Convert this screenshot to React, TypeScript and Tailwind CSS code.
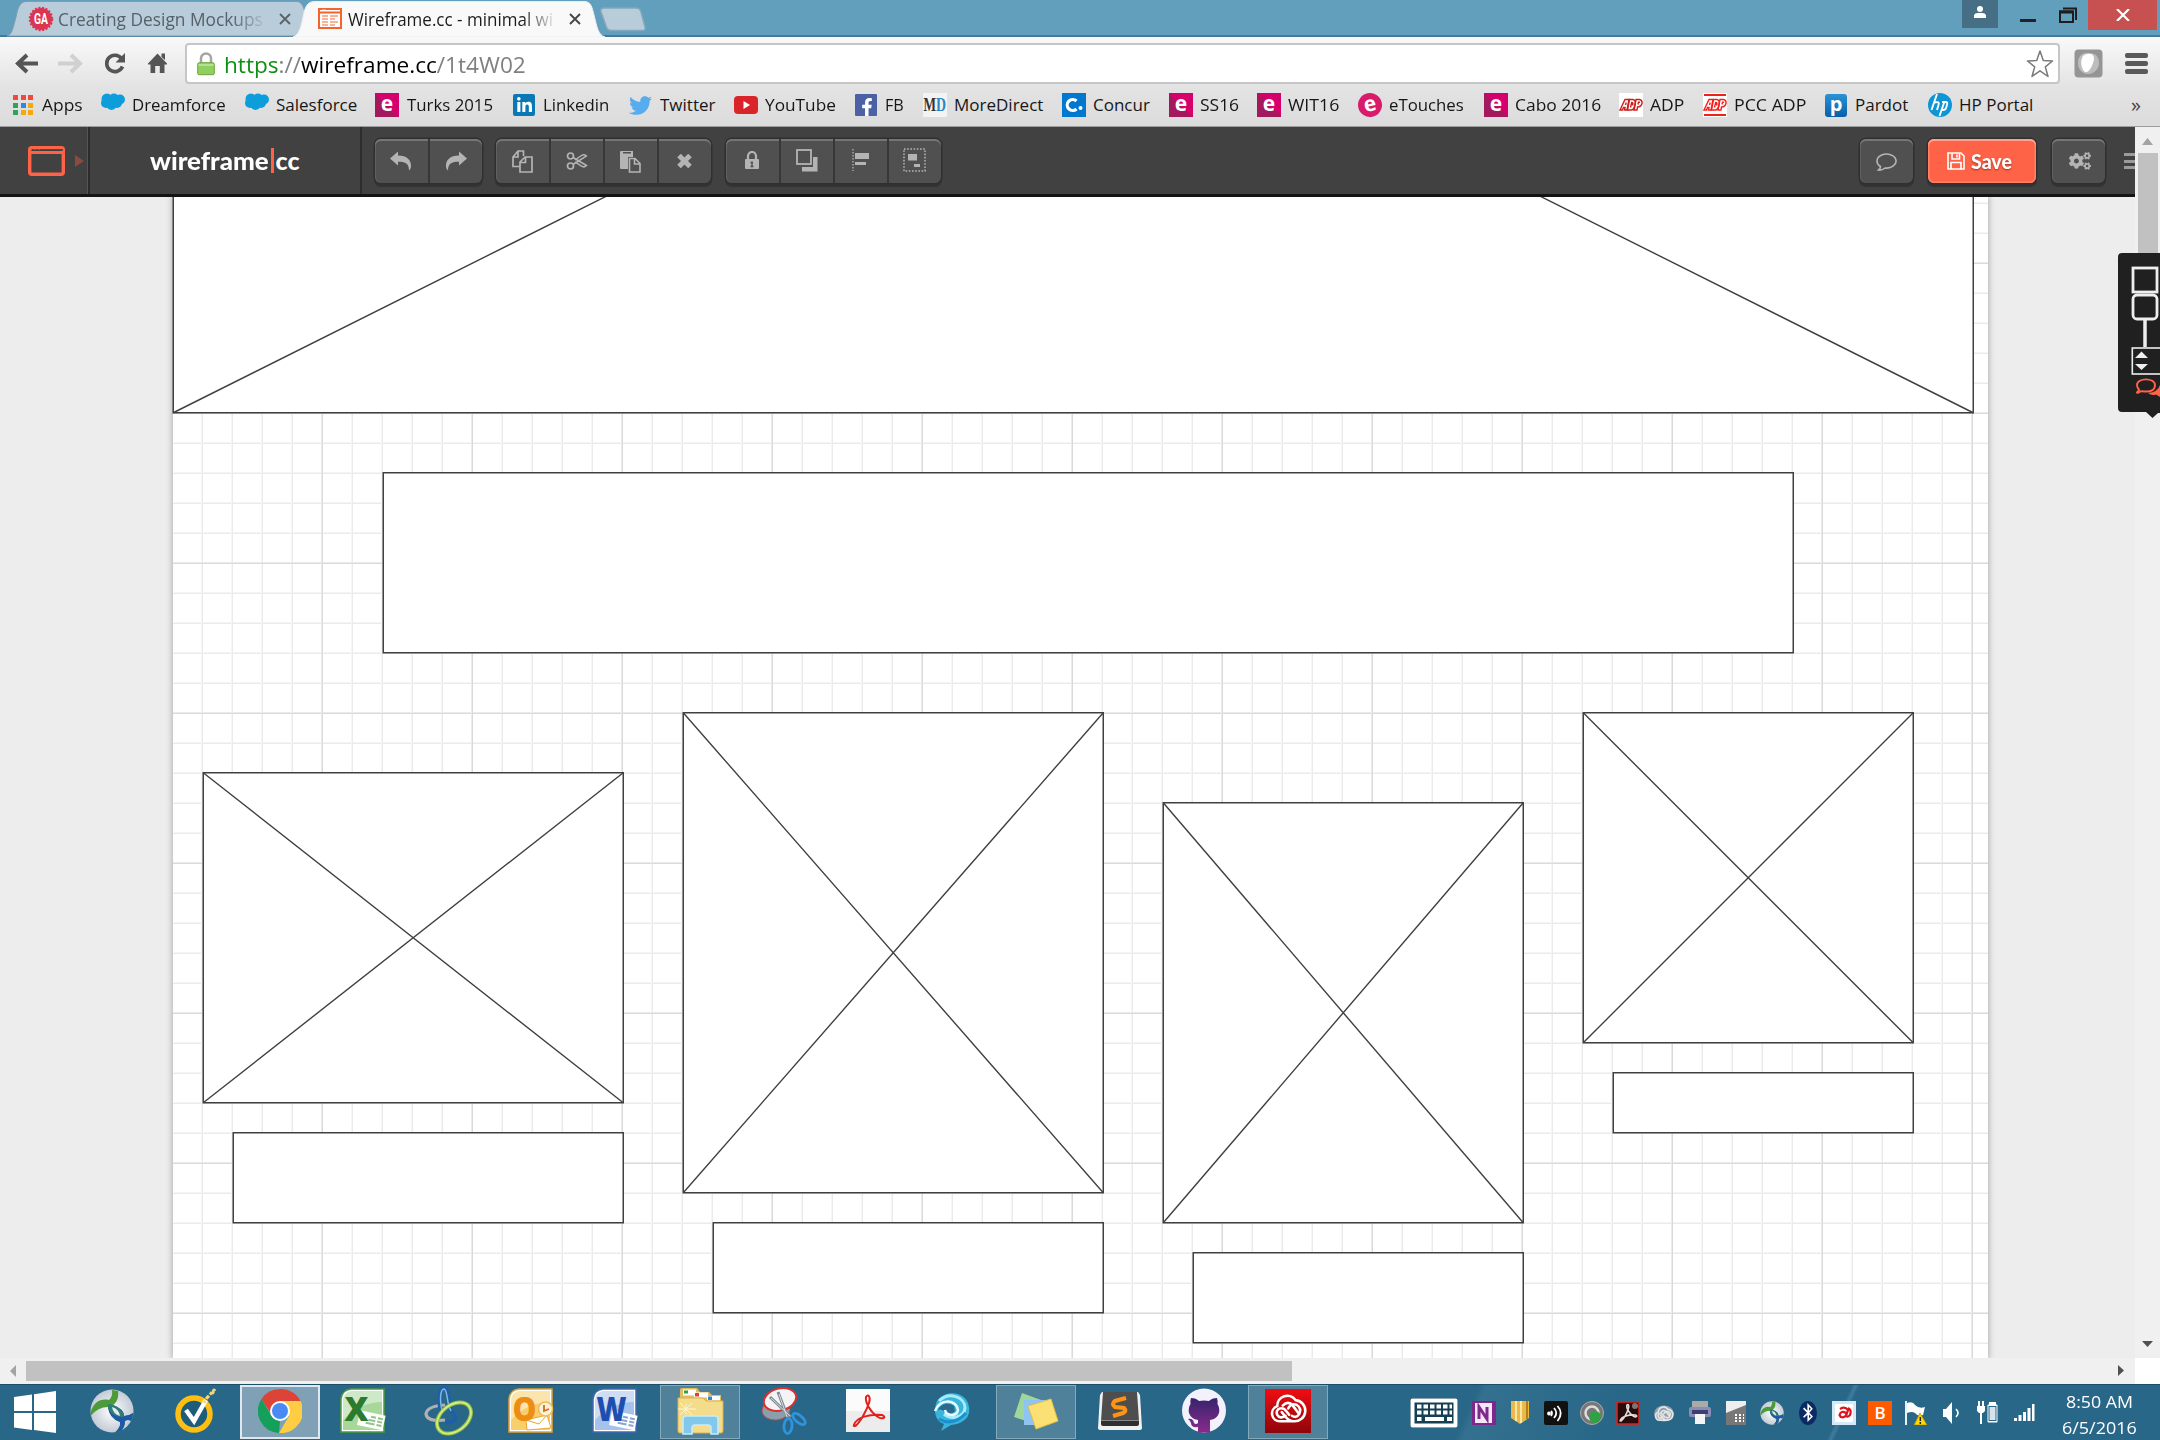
import { useLayoutEffect, useRef, useState, type ReactNode } from "react";
import { FaTwitter, FaFacebookF, FaLinkedinIn, FaCogs, FaBluetoothB } from "react-icons/fa";

/** Text squeezed or stretched horizontally to an exact width. */
function Fit({ w, className = "", children }: { w: number; className?: string; children: ReactNode }) {
  const ref = useRef<HTMLSpanElement>(null);
  const [s, setS] = useState(1);
  useLayoutEffect(() => {
    if (ref.current && ref.current.offsetWidth) setS(w / ref.current.offsetWidth);
  }, [w]);
  return (
    <span className={`block shrink-0 whitespace-nowrap ${className}`} style={{ width: w }}>
      <span ref={ref} className="inline-block origin-left" style={{ transform: `scaleX(${s})` }}>
        {children}
      </span>
    </span>
  );
}

/* ---------- Tab strip ---------- */

function CloseX({ color }: { color: string }) {
  return (
    <svg width="12" height="12" viewBox="0 0 12 12" stroke={color} strokeWidth="1.9">
      <path d="M1 1L11 11M11 1L1 11" />
    </svg>
  );
}

function TabStrip() {
  return (
    <div className="relative flex h-[37px] items-start bg-[#629fbd] shadow-[inset_0_-2px_0_#45799a]">
      <div className="relative h-[37px] w-[305px]">
        <svg className="absolute inset-0" width="305" height="37">
          <path d="M7 36C12 35 13 28 16 17C18 7 20 2 26 1.500H297C302 2 303 6 305 12V36Z" fill="#b9ccda" stroke="#7d9db1" />
        </svg>
        <div className="relative flex h-full items-center pl-[28px]">
          <svg width="26" height="26" viewBox="0 0 26 26">
            <circle cx="13" cy="13" r="11" fill="#db3552" stroke="#db3552" strokeWidth="2.500" strokeDasharray="2 1.500" />
            <text x="6" y="18" fontFamily="Roboto" fontWeight="700" fontSize="14" fill="#fff" textLength="14" lengthAdjust="spacingAndGlyphs">GA</text>
          </svg>
          <Fit w={205} className="ml-[4px] text-[17.5px] leading-[24px] text-[#56616a] [mask-image:linear-gradient(to_right,#000_85%,rgba(0,0,0,0.15))]">Creating Design Mockups</Fit>
          <div className="ml-[16px]"><CloseX color="#59656d" /></div>
        </div>
      </div>
      <div className="relative -ml-[12px] h-[37px] w-[316px]">
        <svg className="absolute inset-0" width="316" height="37">
          <path d="M0 37C6 35 8 27 10 17C12 7 14 2 21 1.500H292C298 2 299 7 301 15C304 27 305 35 312 37Z" fill="#f9f9f9" stroke="#e9eef1" />
        </svg>
        <div className="relative flex h-full items-center pl-[25px]">
          <svg width="24" height="21" viewBox="0 0 24 21">
            <rect x="1" y="1" width="22" height="19" fill="#fff" stroke="#f4622d" strokeWidth="2" />
            <path d="M1 4.500H23" stroke="#f4622d" strokeWidth="2" />
            <path d="M4 2.200H8" stroke="#fff" strokeWidth="1" />
            <path d="M4 8H10M4 11H10M4 14H10M4 17H10M12 8H20M12 11H17M12 14H20M12 17H17" stroke="#f79a77" strokeWidth="1.600" />
          </svg>
          <Fit w={205} className="ml-[6px] text-[17.5px] leading-[24px] text-[#1c1c1c] [mask-image:linear-gradient(to_right,#000_85%,rgba(0,0,0,0.12))]">Wireframe.cc - minimal wi</Fit>
          <div className="ml-[16px]"><CloseX color="#474747" /></div>
        </div>
      </div>
      <svg className="-ml-[11px] mt-[7px]" width="50" height="25">
        <path d="M6 1H38Q42 1 43 5L47 20Q48 23.500 44 23.500H14Q9 23.500 8 19L3 5Q2 1 6 1Z" fill="#b9ccda" stroke="#80a8be" strokeWidth="1.500" />
      </svg>
      <div className="ml-auto flex h-[30px] items-start">
        <div className="flex h-[28px] w-[36px] justify-center bg-[#466f85] pt-[6px]">
          <svg width="14" height="13" viewBox="0 0 14 13" fill="#fff">
            <circle cx="7" cy="3" r="3" />
            <path d="M1 12V10Q1 7 5 7H9Q13 7 13 10V12Z" />
          </svg>
        </div>
        <div className="ml-[22px] mt-[19px] h-[3px] w-[16px] bg-[#222]" />
        <svg className="ml-[23px] mt-[7px]" width="18" height="16" fill="none" stroke="#1d1d1d">
          <path d="M4 1.500H17V13" strokeWidth="2" />
          <rect x="1" y="4.500" width="13" height="10.500" strokeWidth="2" />
          <path d="M0 5H15" strokeWidth="3" />
        </svg>
        <div className="ml-[11px] mr-[3px] flex h-[30px] w-[69px] items-center justify-center bg-[#c75050]">
          <svg width="14" height="12" stroke="#fff" strokeWidth="2.200"><path d="M1 0L13 12M13 0L1 12" /></svg>
        </div>
      </div>
    </div>
  );
}

/* ---------- Address row ---------- */

function AddressRow() {
  return (
    <div className="flex h-[49px] items-center bg-gradient-to-b from-[#f9f9f9] to-[#e4e4e4] pt-[4px]">
      <svg width="185" height="40" viewBox="0 0 185 40" fill="none">
        <path d="M38 19.500H18M27 11L18 19.500L27 28" stroke="#555" strokeWidth="4" />
        <path d="M58 19.500H79M71 11L80 19.500L71 28" stroke="#d0d0d0" strokeWidth="4" />
        <path d="M121.500 14.500A8.200 8.200 0 1 0 122.500 22.500" stroke="#555" strokeWidth="3.600" />
        <path d="M125 9V18.500H115.500Z" fill="#555" />
        <path d="M157.500 9.500L167 19.500V20.500H164.500V29H159.800V22H155.200V29H150.500V20.500H148V19.500Z" fill="#555" />
        <path d="M161.500 9.500H165V16L161.500 13Z" fill="#555" />
      </svg>
      <div className="flex h-[41px] w-[1875px] items-center rounded-[4px] border-2 border-[#c6c6c6] bg-white pl-[10px]">
        <svg width="18" height="24" viewBox="0 0 18 24">
          <path d="M4 12V6.500A5 5 0 0 1 14 6.500V12" fill="none" stroke="#a5a5a5" strokeWidth="2.500" />
          <rect x="0.700" y="10.700" width="16.600" height="12" rx="1.500" fill="#91d05f" stroke="#6ca63f" />
          <path d="M1.500 13H16.500" stroke="#b5e391" strokeWidth="2" />
        </svg>
        <Fit w={302} className="ml-[9px] text-[22px] leading-[30px] text-[#808080]">
          <span className="text-[#0b9010]">https</span>://<span className="text-black">wireframe.cc</span>/1t4W02
        </Fit>
        <svg className="ml-auto mr-[4px]" width="28" height="28" viewBox="0 0 28 28">
          <path d="M14 1L17.300 10.500L26.500 11L19.300 16.800L22 26.500L14 20.800L6 26.500L8.700 16.800L1.500 11L10.700 10.500Z" fill="#fff" stroke="#7a7a7a" strokeWidth="1.500" strokeLinejoin="round" />
        </svg>
      </div>
      <svg className="ml-[14px]" width="29" height="29" viewBox="0 0 29 29">
        <rect x="0.500" y="0.500" width="28" height="28" rx="4" fill="#959595" />
        <path d="M4 14C4 7 9 3 15 4C22 4 25 8 25 14C25 20 20 25 14 25C8 25 4 20 4 14Z" fill="#bdbdbd" />
        <path d="M14 5C20 4 21 9 19 14C17 20 14 24 11 23C8 21 6 14 8 9C9 6 11 5 14 5Z" fill="#fff" />
      </svg>
      <div className="ml-[22px] flex w-[23px] flex-col gap-[3px]">
        <div className="h-[5px] rounded-[2px] bg-[#5a5a5a]" />
        <div className="h-[5px] rounded-[2px] bg-[#5a5a5a]" />
        <div className="h-[5px] rounded-[2px] bg-[#5a5a5a]" />
      </div>
    </div>
  );
}

/* ---------- Bookmarks ---------- */

const Apps = () => (
  <div className="grid w-[20px] grid-cols-3 gap-[2.5px]">
    <i className="h-[5px] bg-[#f04a3e]" /><i className="h-[5px] bg-[#f04a3e]" /><i className="h-[5px] bg-[#f04a3e]" />
    <i className="h-[5px] bg-[#2fa35b]" /><i className="h-[5px] bg-[#2b87e8]" /><i className="h-[5px] bg-[#f5a90c]" />
    <i className="h-[5px] bg-[#2fa35b]" /><i className="h-[5px] bg-[#f5a90c]" /><i className="h-[5px] bg-[#f5a90c]" />
  </div>
);
const Cloud = () => (
  <svg className="-mt-[7px]" width="24" height="17" viewBox="0 0 24 17" fill="#0d9ddb">
    <circle cx="6" cy="6" r="5.500" /><circle cx="13" cy="5.500" r="5" /><circle cx="19" cy="6.500" r="5" />
    <circle cx="5" cy="10" r="5" /><circle cx="10.500" cy="12" r="5" /><circle cx="16" cy="10" r="5" />
  </svg>
);
const ESquare = () => (
  <div className="flex h-[24px] w-[24px] items-center justify-center bg-gradient-to-tr from-[#a3195b] from-50% to-[#d6006d] to-50% pb-[4px] text-[21px] font-bold leading-none text-white">e</div>
);
const ECircle = () => (
  <div className="flex h-[24px] w-[24px] -rotate-12 items-center justify-center rounded-full bg-[#d81b6a] pb-[4px] text-[21px] font-bold leading-none text-white">e</div>
);
const LinkedIn = () => (
  <div className="flex h-[22px] w-[22px] items-center justify-center rounded-[2px] bg-[#0a78b5]"><FaLinkedinIn size={17} color="#fff" /></div>
);
const YouTube = () => (
  <svg width="24" height="18"><rect width="24" height="18" rx="4" fill="#d9252a" /><path d="M9.500 5L16 9L9.500 13Z" fill="#fff" /></svg>
);
const Facebook = () => (
  <div className="flex h-[22px] w-[22px] items-end justify-end overflow-hidden rounded-[1px] bg-[#4a62a5] pr-[1px]"><FaFacebookF size={18} color="#fff" /></div>
);
const MoreDirect = () => (
  <svg width="24" height="24"><rect width="24" height="24" fill="#f3f3f3" />
    <text x="0.500" y="18" fontFamily="Liberation Serif" fontWeight="700" fontSize="18" textLength="12.500" lengthAdjust="spacingAndGlyphs" fill="#333">M</text>
    <text x="13" y="18" fontFamily="Liberation Serif" fontWeight="700" fontSize="18" textLength="10" lengthAdjust="spacingAndGlyphs" fill="#2a88c4">D</text>
  </svg>
);
const Concur = () => (
  <svg width="24" height="24"><rect width="24" height="24" fill="#0078cf" />
    <path d="M14.500 8A5.500 5.500 0 1 0 14.500 16" fill="none" stroke="#fff" strokeWidth="3.200" /><circle cx="18.500" cy="15" r="2" fill="#fff" /></svg>
);
const Adp = ({ bars = false }: { bars?: boolean }) => (
  <svg width="24" height="24"><rect width="24" height="24" fill="#fff" />
    {bars && <path d="M1 2H23M1 22H23" stroke="#f2201b" strokeWidth="2" />}
    <g fill="none" stroke={bars ? "#f2201b" : "#cb1f1b"} strokeWidth="1.400">
      <path d="M1 17L6 6.500H10L8 17H5.500L6 14.500H4.500L3.500 17ZM6.500 12L7.200 9.500" />
      <path d="M8.500 17L10.500 6.500H14Q17 7 16 12Q15 17 12 17ZM11.500 14.500L12.700 9.500Q14.500 9.500 13.500 12.500" />
      <path d="M15 17L17 6.500H20.500Q23.500 7 23 10.500Q22 14 18.500 14L18 17ZM19 11.500L19.500 9.200H21" />
    </g>
  </svg>
);
const Pardot = () => (
  <div className="flex h-[23px] w-[22px] items-center justify-center rounded-[3px] bg-gradient-to-b from-[#2b93d6] to-[#075fa8] pb-[3px] text-[20px] font-bold leading-none text-white">p</div>
);
const Hp = () => (
  <svg width="24" height="24"><circle cx="12" cy="12" r="12" fill="#0d96d6" />
    <path d="M9 1L3.500 17M6.500 9.500Q12 8 10.500 12L9 17M16.500 8.500L11.500 23M14 9H17.500Q20 9 19 12L18 15Q17.500 17 15 17H13.500" fill="none" stroke="#fff" strokeWidth="1.900" /></svg>
);

type Mark = { icon: ReactNode; label: string; tw: number; width: string; gap?: string };
const MARKS: Mark[] = [
  { icon: <Apps />, label: "Apps", tw: 41, width: "w-[88px]", gap: "gap-[9px]" },
  { icon: <Cloud />, label: "Dreamforce", tw: 94, width: "w-[144px]" },
  { icon: <Cloud />, label: "Salesforce", tw: 81, width: "w-[130px]" },
  { icon: <ESquare />, label: "Turks 2015", tw: 86, width: "w-[138px]", gap: "gap-[8px]" },
  { icon: <LinkedIn />, label: "Linkedin", tw: 66, width: "w-[116px]", gap: "gap-[8px]" },
  { icon: <FaTwitter size={23} color="#55acee" />, label: "Twitter", tw: 55, width: "w-[105px]", gap: "gap-[8px]" },
  { icon: <YouTube />, label: "YouTube", tw: 71, width: "w-[121px]" },
  { icon: <Facebook />, label: "FB", tw: 19, width: "w-[68px]", gap: "gap-[8px]" },
  { icon: <MoreDirect />, label: "MoreDirect", tw: 89, width: "w-[139px]" },
  { icon: <Concur />, label: "Concur", tw: 57, width: "w-[107px]" },
  { icon: <ESquare />, label: "SS16", tw: 39, width: "w-[88px]" },
  { icon: <ESquare />, label: "WIT16", tw: 51, width: "w-[101px]" },
  { icon: <ECircle />, label: "eTouches", tw: 75, width: "w-[126px]" },
  { icon: <ESquare />, label: "Cabo 2016", tw: 86, width: "w-[135px]" },
  { icon: <Adp />, label: "ADP", tw: 34, width: "w-[84px]" },
  { icon: <Adp bars />, label: "PCC ADP", tw: 72, width: "w-[122px]" },
  { icon: <Pardot />, label: "Pardot", tw: 53, width: "w-[103px]", gap: "gap-[8px]" },
  { icon: <Hp />, label: "HP Portal", tw: 74, width: "w-[110px]" },
];

function Bookmarks() {
  return (
    <div className="flex h-[41px] items-center border-b border-[#9d9d9d] bg-gradient-to-b from-[#e3e3e3] to-[#dcdcdc] pb-[2px] pl-[13px]">
      {MARKS.map((m) => (
        <div key={m.label} className={`flex h-full shrink-0 items-center ${m.gap ?? "gap-[7px]"} ${m.width}`}>
          {m.icon}
          <Fit w={m.tw} className="text-[17px] leading-[24px] text-[#161616]">{m.label}</Fit>
        </div>
      ))}
      <span className="ml-auto mr-[19px] text-[20px] leading-none text-[#444]">»</span>
    </div>
  );
}

/* ---------- Editor toolbar ---------- */

const G = "#b4b4b4";
const Undo = ({ flip = false }: { flip?: boolean }) => (
  <svg className={flip ? "-scale-x-100" : ""} width="22" height="20" viewBox="0 0 22 20" fill={G}>
    <path d="M0 7.500L8 0.500V4.500C17 4.500 21.500 9 21 16Q20.700 18 19 19.500C19 13 16 10.500 8 10.700V14.500Z" />
  </svg>
);
const Copy = () => (
  <svg width="21" height="23" viewBox="0 0 21 23" fill="none" stroke={G} strokeWidth="1.700">
    <path d="M8 16.500H1V7L6 1H11.500V6M6 1V7H1" />
    <path d="M8 22V12L13 7H20V22ZM13.500 7V12.500H8" />
  </svg>
);
const Cut = () => (
  <svg width="22" height="18" viewBox="0 0 22 18" fill="none" stroke={G} strokeWidth="1.700">
    <circle cx="4.500" cy="4" r="3" /><circle cx="4.500" cy="14" r="3" />
    <path d="M7 5.500L20.500 13.500Q18 16 15.500 14L9 9.800M7 12.500L20.500 4Q18 1.800 15.500 3.500L9 8" strokeWidth="1.500" />
  </svg>
);
const Paste = () => (
  <svg width="21" height="23" viewBox="0 0 21 23">
    <path d="M1 1H13V7H8V19H1Q0 19 0 18V2Q0 1 1 1Z" fill={G} /><path d="M3 2.800H11" stroke="#515151" strokeWidth="1.500" />
    <path d="M9.500 8.500H15L20 13.500V22H9.500ZM14.500 8.500V14H20" fill="#515151" stroke={G} strokeWidth="1.600" />
  </svg>
);
const Times = () => <svg width="15" height="14" stroke={G} strokeWidth="5"><path d="M2 1.500L13 12.500M13 1.500L2 12.500" /></svg>;
const Lock = () => (
  <svg className="-mt-[2px]" width="14" height="18" viewBox="0 0 14 18"><path d="M3 9V5A4 4 0 0 1 11 5V9" fill="none" stroke={G} strokeWidth="2.200" />
    <rect y="8" width="14" height="10" rx="1" fill={G} /><path d="M7 10.500V15.500M5.500 11.500H8M5.500 15.500H8.500" stroke="#515151" strokeWidth="1.400" /></svg>
);
const Layer = () => (
  <svg className="-mt-[2px]" width="22" height="23" viewBox="0 0 22 23"><path d="M17 8H21.500V22.500H6V18H17Z" fill={G} /><rect x="1" y="1" width="14" height="14" fill="none" stroke={G} strokeWidth="1.800" /></svg>
);
const Align = () => (
  <svg className="-mt-[3px]" width="18" height="22" viewBox="0 0 18 22"><path d="M1 0V22" stroke={G} strokeWidth="1.300" strokeDasharray="1.500 1.500" /><path d="M3 4H17V10H3ZM3 13H14V16H3Z" fill={G} /></svg>
);
const Group = () => (
  <svg className="-mt-[3px]" width="23" height="24" viewBox="0 0 23 24"><rect x="1" y="1" width="21" height="22" fill="none" stroke={G} strokeWidth="1.500" strokeDasharray="1.600 1.600" /><path d="M5 6H14V12.500H5ZM11 16H17V19H11Z" fill={G} /></svg>
);

const BTN_BOX = "flex h-[44px] overflow-hidden rounded-[6px] bg-[#505050] shadow-[inset_0_2px_0_#757575,inset_1px_0_0_#606060,0_0_0_1.5px_#303030,0_3px_0_1px_#333]";

function ButtonGroup({ items }: { items: ReactNode[] }) {
  return (
    <div className={BTN_BOX}>
      {items.map((it, i) => (
        <div key={i} className={`flex items-center justify-center pr-px ${i ? "w-[54px] border-l-2 border-[#373737]" : "w-[53px]"}`}>{it}</div>
      ))}
    </div>
  );
}

function EditorBar() {
  return (
    <div className="flex h-[70px] w-[2135px] shrink-0 overflow-hidden border-b-[3px] border-[#141414] bg-[#414141]">
      <div className="flex w-[90px] items-center border-r-2 border-[#2b2b2b] pl-[28px] pt-px shadow-[inset_-1px_0_0_#555]">
        <svg width="37" height="30" viewBox="0 0 37 30">
          <rect x="1.700" y="1.700" width="33.600" height="26.600" rx="2" fill="none" stroke="#ff6347" strokeWidth="3.400" />
          <path d="M2 6.500H35" stroke="#ff6347" strokeWidth="3" /><path d="M4 4H6M8 4H10M12 4H35" stroke="#414141" strokeWidth="1.500" />
        </svg>
        <svg className="ml-[10px]" width="9" height="12"><path d="M0 0L9 6L0 12Z" fill="#8a4a40" /></svg>
      </div>
      <div className="flex w-[272px] items-center border-r-2 border-[#2d2d2d] pl-[60px] font-['Lato',sans-serif] text-[25px] font-black leading-none text-white">
        <Fit w={119}>wireframe</Fit>
        <div className="mx-[2px] h-[25px] w-[2.5px] bg-[#ff6347]" />
        <Fit w={24}>cc</Fit>
      </div>
      <div className="flex items-start pl-[13px] pt-[12px]">
        <ButtonGroup items={[<Undo />, <Undo flip />]} />
        <div className="w-[14px]" />
        <ButtonGroup items={[<Copy />, <Cut />, <Paste />, <Times />]} />
        <div className="w-[15px]" />
        <ButtonGroup items={[<Lock />, <Layer />, <Align />, <Group />]} />
      </div>
      <div className="ml-auto flex items-start pt-[12px]">
        <div className={`${BTN_BOX} w-[53px] items-center justify-center pt-[2px]`}>
          <svg width="22" height="18" viewBox="0 0 22 18" fill="none" stroke={G} strokeWidth="1.600"><path d="M4.500 13.500A9.500 7 0 1 1 9 15Q6 17.500 2.500 17Q4.500 15.500 4.500 13.500Z" /></svg>
        </div>
        <div className="ml-[15px] flex h-[44px] w-[108px] items-center rounded-[6px] bg-[#ff6347] pl-[19px] shadow-[inset_0_2px_0_#ffa08f,inset_0_0_0_1.5px_#ff8168,0_0_0_1.5px_#303030,0_3px_0_1px_#333]">
          <svg width="18" height="18" viewBox="0 0 18 18" fill="none" stroke="#fff" strokeWidth="1.600"><path d="M1 1H14L17 4V17H1ZM5 1V7H12.500V1M4 17V10.500H14V17M10 2.500V5.500" /></svg>
          <Fit w={41} className="ml-[6px] font-['Lato',sans-serif] text-[20px] font-black leading-[26px] text-white [text-shadow:0_1px_2px_#a03020]">Save</Fit>
        </div>
        <div className={`${BTN_BOX} ml-[16px] w-[53px] items-center justify-center pl-[2px]`}><FaCogs size={22} color={G} /></div>
        <div className="ml-[19px] mt-[14px] flex w-[11px] flex-col gap-[3.500px]">
          <div className="h-[3px] bg-[#9b9b9b]" /><div className="h-[3px] bg-[#9b9b9b]" /><div className="h-[3px] bg-[#9b9b9b]" />
        </div>
      </div>
    </div>
  );
}

/* ---------- Wireframe canvas ---------- */

// Each shape's place and size on the sheet, in pixels.
type Shape = { x: number; y: number; w: number; h: number; cross?: boolean };
const SHAPES: Shape[] = [
  { x: 0, y: -685, w: 1800, h: 900, cross: true },
  { x: 210, y: 275, w: 1410, h: 180 },
  { x: 30, y: 575, w: 420, h: 330, cross: true },
  { x: 60, y: 935, w: 390, h: 90 },
  { x: 510, y: 515, w: 420, h: 480, cross: true },
  { x: 540, y: 1025, w: 390, h: 90 },
  { x: 990, y: 605, w: 360, h: 420, cross: true },
  { x: 1020, y: 1055, w: 330, h: 90 },
  { x: 1410, y: 515, w: 330, h: 330, cross: true },
  { x: 1440, y: 875, w: 300, h: 60 },
];

function Stencil({ x, y, w, h, cross }: Shape) {
  return (
    <svg className="absolute" width={w + 4} height={h + 4} style={{ left: x - 1, top: y }}>
      <rect x="1.250" y="0.750" width={w} height={h} fill="#fff" stroke="#404040" strokeWidth="1.500" />
      {cross && <path d={`M1.250 0.750l${w} ${h}M${w + 1.25} 0.750l${-w} ${h}`} stroke="#404040" strokeWidth="1.400" />}
    </svg>
  );
}

function Sheet() {
  return (
    <div className="relative h-[1161px] w-[2135px] shrink-0 overflow-hidden bg-[#ededed] pl-[173px]">
      <div className="relative h-full w-[1815px] bg-white shadow-[0_0_6px_1px_#b0b0b0]">
        <div className="absolute inset-0 bg-[linear-gradient(to_right,#f5f5f5_1px,#ebebeb_1px,#ebebeb_2px,transparent_2px),linear-gradient(to_bottom,#f5f5f5_1px,#ebebeb_1px,#ebebeb_2px,transparent_2px)] bg-[length:30px_30px] [background-position:28px_0,0_5px]" />
        <div className="absolute inset-0 bg-[linear-gradient(to_right,#ebebeb_1px,#dadada_1px,#dadada_2px,transparent_2px),linear-gradient(to_bottom,#ebebeb_1px,#dadada_1px,#dadada_2px,transparent_2px)] bg-[length:150px_150px] [background-position:-2px_0,0_65px]" />
        {SHAPES.map((s, i) => <Stencil key={i} {...s} />)}
      </div>
    </div>
  );
}

function VScroll() {
  return (
    <div className="flex w-[25px] flex-col items-center bg-[#f0f0f0] pt-[11px]">
      <svg width="11" height="7"><path d="M0 7L5.500 0L11 7Z" fill="#a3a3a3" /></svg>
      <div className="mt-[8px] h-[190px] w-[20px] bg-[#c1c1c1]" />
      <svg className="mb-[11px] mt-auto" width="11" height="6"><path d="M0 0L5.500 6L11 0Z" fill="#505050" /></svg>
    </div>
  );
}

function HScroll() {
  return (
    <div className="flex h-[26px] bg-white">
      <div className="flex w-[2135px] items-center bg-[#f0f0f0] pb-px pl-[10px]">
        <svg width="6" height="12"><path d="M6 0L0 6L6 12Z" fill="#a3a3a3" /></svg>
        <div className="ml-[10px] h-[20px] w-[1266px] bg-[#c1c1c1]" />
        <svg className="ml-auto mr-[11px]" width="6" height="11"><path d="M0 0L6 5.500L0 11Z" fill="#505050" /></svg>
      </div>
    </div>
  );
}

function SideWidget() {
  return (
    <svg className="absolute right-0 top-[253px]" width="42" height="166" viewBox="0 0 42 166">
      <path d="M4 0H42V160L40 160L34.500 165L28 159H4Q0 159 0 155V4Q0 0 4 0Z" fill="#202020" />
      <g fill="none" stroke="#eee" strokeWidth="2.800">
        <rect x="15" y="15" width="24" height="24" />
        <rect x="15" y="42" width="24" height="24" rx="4" />
        <path d="M27 67V94" strokeWidth="3.500" />
        <rect x="14.300" y="95" width="30" height="26" strokeWidth="1.600" />
      </g>
      <path d="M17 105H30L23.500 98.500ZM17 111H30L23.500 117Z" fill="#eee" />
      <path d="M42 132Q40 139 30 140Q34 143 38 141.500L42 144Z" fill="#ff6347" />
      <path d="M22 138.500Q19.500 140.500 19 139.500Q20.500 138 21 136.500Q19 134.500 19 132C19 124.500 37 124.500 37 132Q37 139 27 138.500Q24 138 22 138.500Z" fill="#202020" stroke="#ff6347" strokeWidth="1.900" />
    </svg>
  );
}

/* ---------- Taskbar ---------- */

const WinLogo = () => (
  <svg width="42" height="42" viewBox="0 0 42 42" fill="#fff"><path d="M0 6L18 3.500V20H0ZM20 3.200L42 0V20H20ZM0 22H18V39L0 36.500ZM20 22H42V42L20 39Z" /></svg>
);
const Globe = ({ size = 44 }: { size?: number }) => (
  <svg width={size} height={size} viewBox="0 0 44 44">
    <defs><radialGradient id="glb"><stop offset="0" stopColor="#fff" /><stop offset="1" stopColor="#c3cbd6" /></radialGradient></defs>
    <circle cx="22" cy="22" r="21.500" fill="url(#glb)" />
    <path d="M0.500 24C3 13 11 9 19 11Q23 7 22 1L28 2C29 10 26 14 23 16Q34 20 34 27Q39 27 43 24Q43 29 41 32Q38 30 35 32Q35 38 31 42L25 43.500Q31 38 30 33Q19 29 18 18Q8 18 0.500 27Z" fill="#4c9a38" />
    <path d="M23 16Q34 20 34 27Q39 27 43 24Q43 29 41 32Q38 30 35 32Q35 38 31 42L25 43.500Q31 38 30 33Q19 29 18 18Z" fill="#1d59a8" />
    <path d="M18 18Q17 13 23 16Q33 20 34 28Q20 28 18 18Z" fill="#2f7d76" />
    <path d="M22 18Q29 20 30 27Q23 25 22 18Z" fill="#e3eaee" />
  </svg>
);
const Norton = () => (
  <svg width="44" height="46" viewBox="0 0 44 46">
    <circle cx="20" cy="26" r="16" fill="#1e5c7c" stroke="#fdc012" strokeWidth="5.500" />
    <path d="M12 22L20 33L32 12" fill="none" stroke="#fff" strokeWidth="4.500" /><path d="M30 15L34 8M33 10L40 2M38 6L41 1" stroke="#f2d77a" strokeWidth="3" strokeDasharray="3 1.500" />
  </svg>
);
const Chrome = () => (
  <svg width="44" height="44" viewBox="0 0 44 44">
    <path d="M22 0A22 22 0 0 1 42.500 12H22L12.500 24L3.500 10A22 22 0 0 1 22 0Z" fill="#db4437" />
    <path d="M3.500 10L13.500 27L22 32L21 44A22 22 0 0 1 3.500 10Z" fill="#149f5b" />
    <path d="M42.500 12H22L31 27L21 44A22 22 0 0 0 42.500 12Z" fill="#fecd41" />
    <circle cx="22" cy="22" r="10" fill="#fff" /><circle cx="22" cy="22" r="8" fill="#4a8af4" />
  </svg>
);
function Office({ letter, c, dark, light, clock = false }: { letter: string; c: string; dark: string; light: string; clock?: boolean }) {
  return (
    <svg className="-ml-[2px]" width="46" height="46" viewBox="0 0 46 46">
      <path d="M11 1H44V44H1V11Q2 2 11 1Z" fill="#fff" stroke={c} strokeWidth="1.500" />
      <path d="M12 3H42V42H3V12Q4 4 12 3Z" fill={light} />
      <path d="M12 3H42V14Q20 14 3 32V12Q4 4 12 3Z" fill="#fff" opacity=".45" />
      {!clock && (
        <g transform="rotate(12 32 34)"><rect x="18" y="25" width="26" height="15" fill="#fff" />
          <path d="M30 29H35M37 29H42M28 32.500H35M37 32.500H42M26 36H35M37 36H42" stroke={c} strokeWidth="2" opacity=".6" /></g>
      )}
      {clock && <path d="M18 32L39 27L43 40L19 42Z" fill="#fff" stroke="#e8a730" />}
      {clock && <path d="M18 32L31 36L39 27" fill="none" stroke="#e8a730" />}
      <text x="4.500" y="32.500" fontFamily="Open Sans" fontWeight="800" fontSize="34" fill={dark} textLength={letter === "W" ? 30 : 24} lengthAdjust="spacingAndGlyphs">{letter}</text>
      {clock && <g><circle cx="37.500" cy="21" r="7" fill="#fdf3d8" stroke="#f2ba55" strokeWidth="1.500" /><path d="M36 17V23L41 21" fill="none" stroke="#d56a17" strokeWidth="1.800" /></g>}
    </svg>
  );
}
const Rings = () => (
  <svg width="50" height="50" viewBox="0 0 50 50" fill="none">
    <path d="M22 34Q4 36 3 28Q4 20 22 19" stroke="#b4b0b0" strokeWidth="3.200" />
    <path d="M19 28C14 14 17 2 21 2C27 2 24 16 28 24C36 33 32 37 22 36" stroke="#1f5fa8" strokeWidth="4" />
    <path d="M19 24C16 12 18 3 21 3C25 4 23 16 28 25" stroke="#7fb9ea" strokeWidth="1.500" />
    <ellipse cx="31" cy="32" rx="19" ry="13" transform="rotate(-38 31 32)" stroke="#8fbf3a" strokeWidth="4" />
    <ellipse cx="31" cy="32" rx="19" ry="13" transform="rotate(-38 31 32)" stroke="#d3ec8b" strokeWidth="1.800" />
  </svg>
);
const Folder = () => (
  <svg width="48" height="48" viewBox="0 0 48 48">
    <path d="M4 3Q4 1 6 1H21L24 5H33L36 8H45V44H3Z" fill="#e3bd5c" /><rect x="7" y="2.500" width="13" height="6" fill="#fff" /><rect x="8" y="3.500" width="4" height="3" fill="#2f9e4d" />
    <rect x="18" y="5.500" width="14" height="5" fill="#fff" /><rect x="19" y="6" width="4" height="3.500" fill="#e3402f" /><rect x="31" y="9" width="13" height="4.500" fill="#fff" /><rect x="32" y="9.500" width="4" height="3.500" fill="#3584d6" />
    <path d="M2 11H27L30 14H47V44Q47 46 45 46H4Q2 46 2 44Z" fill="#f3dc8c" stroke="#d9b24e" />
    <path d="M10 17V27M2 22H20M4 16L16 28M16 16L4 28" stroke="#fdf6d4" strokeWidth="1" />
    <path d="M7 47V32Q7 29 10 29H39Q42 29 42 32V47H35V41Q35 38 32 38H19Q16 38 16 41V47Z" fill="#82c8ea" stroke="#c8ecfb" strokeWidth="1.500" />
  </svg>
);
const Snip = () => (
  <svg width="46" height="48" viewBox="0 0 46 48" fill="none">
    <ellipse cx="15" cy="23" rx="14" ry="10" fill="#8a9fae" stroke="#b05050" strokeWidth="1" transform="rotate(-5 15 23)" />
    <ellipse cx="19" cy="12.500" rx="16.500" ry="11" fill="#f4f4f6" stroke="#d9302c" strokeWidth="2" transform="rotate(-15 19 12.500)" />
    <path d="M9 10L30 30M17 5L27 31" stroke="#7d8891" strokeWidth="3" /><path d="M10 11L29 29M18 7L26 30" stroke="#dbe1e5" strokeWidth="1" />
    <ellipse cx="38" cy="32" rx="3.500" ry="7.500" transform="rotate(-50 38 32)" stroke="#2f93de" strokeWidth="2.800" /><ellipse cx="27" cy="39" rx="4" ry="7.500" transform="rotate(5 27 39)" stroke="#2f93de" strokeWidth="2.800" />
  </svg>
);
const ACROBAT = "M8 36C10 28 24 25 36 26C41 28 37 31 32 28C24 23 19 13 20 8C22 4 25 8 23 14C20 23 14 33 10 36.500Q7 38 8 36Z";
const Adobe = () => (
  <svg width="44" height="43" viewBox="0 0 44 43"><rect width="44" height="43" fill="#ececec" /><rect width="44" height="22" fill="#fbfbfb" />
    <path d={ACROBAT} fill="none" stroke="#e3211c" strokeWidth="2" /></svg>
);
const Swirl = () => (
  <svg width="38" height="40" viewBox="0 0 38 40">
    <path d="M4 10C12 -2 34 0 36 16C38 28 28 33 18 34L8 40L11 33C2 30 0 20 4 10Z" fill="#39b5dc" />
    <path d="M6 10C16 0 32 6 32 17C31 27 18 29 11 23" fill="none" stroke="#a6ecfa" strokeWidth="3" />
    <path d="M5 19C8 12 16 11 21 15L22 20Q18 25 13 22Q9 17 5 19Z" fill="#2a6b8d" />
    <path d="M2 20C8 6 24 9 25 19C24 26 13 25 12 19" fill="none" stroke="#e6fbff" strokeWidth="2.500" /><path d="M6 28Q20 36 33 22" fill="none" stroke="#1c8fd0" strokeWidth="3" />
  </svg>
);
const Sticky = () => (
  <svg width="46" height="38" viewBox="0 0 46 38">
    <path d="M9 1L28 8L20 31L1 25Z" fill="#9fd79a" /><rect x="11" y="8" width="22" height="25" fill="#8ec4f3" />
    <path d="M15 14L38 7L45 29L23 37Z" fill="#fbe174" stroke="#e7bf3d" />
  </svg>
);
const Sublime = () => (
  <svg width="44" height="40" viewBox="0 0 44 40">
    <path d="M2 4L4 1H40L42 4L44 37Q44 39 42 39H2Q0 39 0 37Z" fill="#f1f1f1" /><path d="M5 1H39L41 30H3Z" fill="#4e4e4e" /><path d="M3 29H41V33Q41 35 39 35H5Q3 35 3 33Z" fill="#2f2f2f" /><path d="M3 29.500H41" stroke="#888" />
    <path d="M28 7L17 10Q13 13 17 16L26 17Q29 20 25 22L15 25" fill="none" stroke="#ff9414" strokeWidth="4.200" />
  </svg>
);
const Octo = () => (
  <svg width="44" height="45" viewBox="0 0 44 45">
    <defs><linearGradient id="oc" x1="0" y1="0" x2="0" y2="1"><stop offset="0" stopColor="#36246d" /><stop offset="1" stopColor="#8a2a8c" /></linearGradient></defs>
    <ellipse cx="22" cy="22.500" rx="22" ry="22" fill="#f3f1fb" />
    <path d="M9 10Q14 10 17 13Q22 12 27 13Q30 10 35 10Q36 13 35.500 16Q38 20 37 25Q35 31 28 32V44.500H16V39Q9 40 9 35Q8 32 6 31Q11 30 12 35Q14 37 16 35V32Q9 31 7 25Q6 20 8.500 16Q8 13 9 10Z" fill="url(#oc)" />
  </svg>
);
const CcMark = ({ stroke, w }: { stroke: string; w: number }) => (
  <g fill="none" stroke={stroke} strokeWidth={w} strokeLinecap="round">
    <path d="M27 34H13A8.500 8.500 0 0 1 10 17.500A11 11 0 0 1 30 11A11.500 11.500 0 1 1 28 34Q23 34 19 29L15 24" />
    <path d="M19 28Q13 32 10 27Q8 22 13 20Q17 19 20 23L23 27M16 17Q22 11 27 17L33 25" />
    <path d="M22 20Q25 14 31 16Q37 20 34 26Q31 31 26 28" />
  </g>
);
const Creative = () => (
  <svg width="46" height="44" viewBox="0 0 46 44">
    <defs><linearGradient id="cc" x1="0" y1="0" x2="0" y2="1"><stop offset="0" stopColor="#f00d12" /><stop offset="1" stopColor="#8e0509" /></linearGradient></defs>
    <rect width="46" height="44" fill="url(#cc)" /><g transform="translate(3 1) scale(.92)"><CcMark stroke="#fff" w={2.8} /></g>
  </svg>
);

const TASKS: { icon: ReactNode; state?: "active" | "open" }[] = [
  { icon: <Globe /> },
  { icon: <Norton /> },
  { icon: <Chrome />, state: "active" },
  { icon: <Office letter="X" c="#4a9c3c" dark="#2b7a2e" light="#a7d89a" /> },
  { icon: <Rings /> },
  { icon: <Office letter="O" c="#e5a12b" dark="#ee8d14" light="#f8cf6b" clock /> },
  { icon: <Office letter="W" c="#3f68b5" dark="#1d4fb0" light="#a6c1ec" /> },
  { icon: <Folder />, state: "open" },
  { icon: <Snip /> },
  { icon: <Adobe /> },
  { icon: <Swirl /> },
  { icon: <Sticky />, state: "open" },
  { icon: <Sublime /> },
  { icon: <Octo /> },
  { icon: <Creative />, state: "open" },
];
const TASK_STYLE = {
  active: "border-2 border-[#dfe8ee] bg-[#7fa0b5]",
  open: "border border-[#83a9bd] bg-[#4f819b]",
  none: "",
};

const TRAY: ReactNode[] = [
  <svg width="24" height="24"><rect width="24" height="24" fill="#80278c" /><rect x="3" y="2" width="17" height="20" fill="#f4e8f6" /><path d="M7 18V6L15 18V6" fill="none" stroke="#80278c" strokeWidth="3" /></svg>,
  <svg width="18" height="23"><path d="M0 0H18V17L9 23L0 17Z" fill="#e9b949" /><path d="M5 0V20M10 0V22" stroke="#fbe7a5" strokeWidth="2" /><path d="M16 0V18" stroke="#b07e1b" strokeWidth="2" /></svg>,
  <svg width="24" height="24" fill="none" stroke="#fff" strokeWidth="1.800"><rect width="24" height="24" rx="2" fill="#111" stroke="none" /><path d="M7 10Q9 12 7 15M10 7Q14.500 12 10 17M13.500 5Q20 12 13.500 20" /><circle cx="5" cy="12.500" r="1" /></svg>,
  <svg width="24" height="24"><circle cx="12" cy="12" r="11.500" fill="#777" stroke="#aaa" /><circle cx="12" cy="12" r="6.500" fill="none" stroke="#ddd" strokeWidth="2.500" /><circle cx="15" cy="16" r="6" fill="#2fa344" /></svg>,
  <svg width="24" height="24"><rect x="1" y="1" width="22" height="22" fill="#2b0b0a" stroke="#e32119" strokeWidth="1.500" /><path d={ACROBAT} transform="translate(0 0) scale(.54)" fill="none" stroke="#ddd" strokeWidth="3" /><circle cx="19" cy="5" r="3" fill="#777" /></svg>,
  <svg width="22" height="18" viewBox="0 0 44 38"><ellipse cx="22" cy="20" rx="21" ry="17" fill="#8fa0aa" /><CcMark stroke="#e4e4e4" w={3.6} /></svg>,
  <svg width="24" height="24"><rect x="4" y="0" width="16" height="8" fill="#aaa" /><rect x="1" y="6" width="22" height="10" rx="2" fill="#8b8db5" /><rect x="4" y="9" width="16" height="4" fill="#3d3f70" /><rect x="7" y="13" width="10" height="10" fill="#f4f4f4" /></svg>,
  <svg width="20" height="24"><rect width="20" height="24" fill="#777" /><path d="M0 0H20V4L0 12Z" fill="#eee" /><path d="M9 14H11M13 14H15M17 14H18M9 17H11M13 17H15M17 17H18M9 20H11M13 20H15M17 20H18" stroke="#fff" strokeWidth="1.800" /></svg>,
  <Globe size={24} />,
  <div className="flex h-[24px] w-[18px] items-center justify-center rounded-[50%] bg-[#0b2a63]"><FaBluetoothB size={19} color="#fff" /></div>,
  <svg width="24" height="24"><rect width="24" height="24" fill="#d5e9f7" /><rect x="3" y="3" width="18" height="18" fill="#fff" /><path d="M14 12Q9 9 7.500 14Q9 18 14 15L16 9Q13 5 8 8M14 12Q14 18 18 14Q20 9 16 7" fill="none" stroke="#e0131c" strokeWidth="2.200" /></svg>,
  <div className="flex h-[24px] w-[24px] items-center justify-center bg-[#ff5a00] text-[17px] font-semibold leading-none text-white">B</div>,
  <svg width="24" height="24"><path d="M2 0V24" stroke="#fff" strokeWidth="1.800" /><path d="M3 2Q9 0 11 4Q15 8 21 6L19 14Q14 16 11 12Q8 10 3 12Z" fill="#fff" /><path d="M16 12L23 24H10Z" fill="#ffd900" stroke="#a88a00" strokeWidth=".7" /><path d="M16.300 16V20M16.300 21V23" stroke="#222" strokeWidth="1.500" /></svg>,
  <svg width="20" height="24"><path d="M1 8H4L10 1V23L4 16H1Z" fill="#fff" /><path d="M14 8Q18 12 14 16" fill="none" stroke="#fff" strokeWidth="1.600" /></svg>,
  <svg width="24" height="24"><rect x="11.500" y="3.500" width="10" height="18" rx="1" fill="#fff" /><rect x="13" y="5.500" width="7" height="14" fill="#d7e3ea" stroke="#296788" strokeWidth="1" /><rect x="13" y="1" width="7" height="3" fill="#fff" /><path d="M3 0V5M7 0V5M5 12V23" stroke="#fff" strokeWidth="2" /><path d="M1 5H9V10L7 12H3L1 10Z" fill="#fff" /></svg>,
  <svg width="22" height="18" fill="#fff"><path d="M1 14H4V17H1ZM5.500 11H8.500V17H5.500ZM10 8H13V17H10ZM14.500 4H17.500V17H14.500ZM19 0H21.500V17H19Z" /></svg>,
];

function Taskbar() {
  return (
    <div className="flex h-[56px] items-center border-t border-[#1d4d67] bg-[#296788]">
      <div className="flex w-[72px] items-center pb-[2px] pl-[14px]"><WinLogo /></div>
      <div className="flex h-full items-start gap-[4px]">
        {TASKS.map((t, i) => (
          <div key={i} className={`flex h-[54px] w-[80px] items-center justify-center pb-[3px] ${TASK_STYLE[t.state ?? "none"]}`}>{t.icon}</div>
        ))}
      </div>
      <div className="relative ml-[82px] flex h-full flex-1 items-center bg-[linear-gradient(115deg,transparent_9%,#34708f_10%,#296788_28%,transparent_28%,transparent_57%,#3f7d9b_57.500%,transparent_58%)]">
        <svg width="48" height="30"><rect width="48" height="30" rx="2" fill="#fff" stroke="#14465f" />
          <rect x="4.500" y="4.500" width="39" height="21" fill="#153f54" />
          <path d="M7 8.500H42M7 14.500H42" stroke="#fff" strokeWidth="4" strokeDasharray="4.500 2" /><path d="M7 21H11.500M15 21H34M37 21H42" stroke="#fff" strokeWidth="4" /></svg>
        <div className="ml-[8px] flex">
          {TRAY.map((t, i) => <div key={i} className="flex h-[24px] w-[36px] items-center justify-center">{t}</div>)}
        </div>
        <div className="ml-[12px] mt-[4px] flex w-[90px] flex-col items-center gap-[2px] text-[17px] leading-[24px] text-white">
          <Fit w={67}>8:50 AM</Fit>
          <Fit w={75}>6/5/2016</Fit>
        </div>
      </div>
    </div>
  );
}

export default function App() {
  return (
    <div className="relative flex h-[1440px] w-[2160px] flex-col overflow-hidden bg-white font-['Open_Sans','Noto_Sans',sans-serif]">
      <TabStrip />
      <AddressRow />
      <Bookmarks />
      <div className="flex h-[1231px]">
        <div className="flex w-[2135px] flex-col">
          <EditorBar />
          <Sheet />
        </div>
        <VScroll />
      </div>
      <HScroll />
      <Taskbar />
      <SideWidget />
    </div>
  );
}
